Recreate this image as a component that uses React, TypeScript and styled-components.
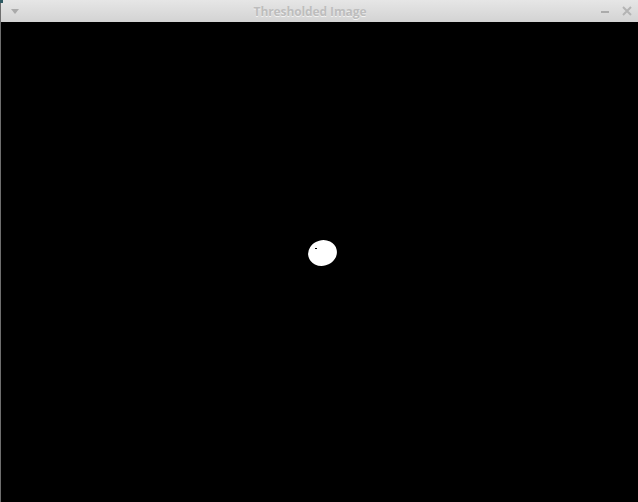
import styled, { createGlobalStyle } from "styled-components";

const Global = createGlobalStyle`
  html, body {
    margin: 0;
    padding: 0;
    background: #000;
    overflow: hidden;
  }
`;

const Window = styled.div`
  width: 638px;
  height: 502px;
  display: flex;
  flex-direction: column;
  border-left: 1px solid #6e6e6e;
  box-sizing: border-box;
  font-family: "Open Sans", "DejaVu Sans", sans-serif;
`;

const TitleBar = styled.div`
  height: 22px;
  flex: none;
  display: flex;
  align-items: center;
  background: linear-gradient(#e6e6e6, #d3d3d3);
  position: relative;
`;

const Corner = styled.div`
  position: absolute;
  left: -1px;
  top: 0;
  width: 3px;
  height: 3px;
  background: #2f5a63;
`;

const MenuBtn = styled.div`
  width: 28px;
  display: flex;
  justify-content: center;
`;

const Title = styled.div`
  flex: 1;
  text-align: center;
  font-size: 12px;
  font-weight: 700;
  color: #bdbdbd;
  text-shadow: 0 1px 0 #f2f2f2;
  letter-spacing: -0.1px;
  padding-right: 10px;
`;

const Controls = styled.div`
  display: flex;
  align-items: center;
  gap: 13px;
  padding-right: 6px;
`;

const Canvas = styled.svg`
  flex: 1;
  display: block;
  background: #000;
`;

export default function App() {
  return (
    <>
      <Global />
      <Window>
        <TitleBar>
          <Corner />
          <MenuBtn>
            <svg width="8" height="5" viewBox="0 0 8 5">
              <path d="M0 0 L8 0 L4 5 Z" fill="#aaaaaa" />
            </svg>
          </MenuBtn>
          <Title>Thresholded Image</Title>
          <Controls>
            <svg width="8" height="9" viewBox="0 0 8 9">
              <rect x="0" y="4" width="8" height="2" fill="#ababab" />
            </svg>
            <svg width="10" height="10" viewBox="0 0 10 10">
              <path d="M1 1 L9 9 M9 1 L1 9" stroke="#b4b4b4" strokeWidth="2" />
            </svg>
          </Controls>
        </TitleBar>
        <Canvas viewBox="0 0 637 480">
          <ellipse cx="321.5" cy="231" rx="14.5" ry="12.8" transform="rotate(-15 321.5 231)" fill="#fff" />
          <rect x="314" y="226" width="2" height="1" fill="#000" />
        </Canvas>
      </Window>
    </>
  );
}
